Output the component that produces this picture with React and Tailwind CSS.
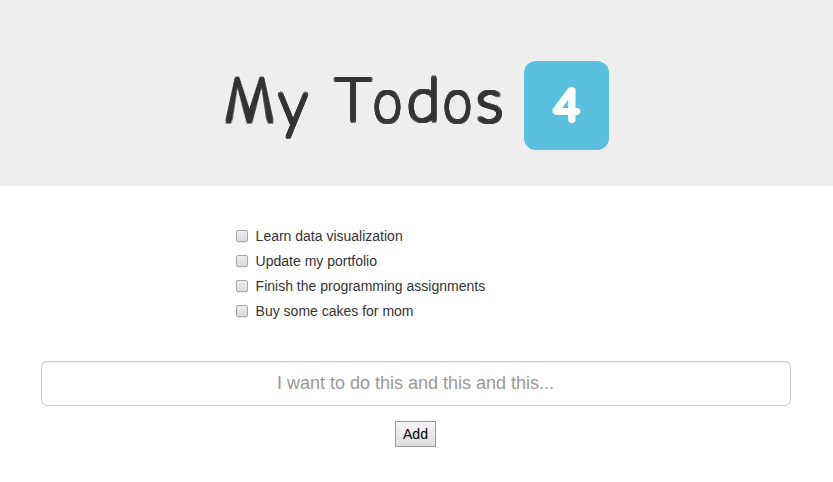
import React from "react";

const todos = [
  "Learn data visualization",
  "Update my portfolio",
  "Finish the programming assignments",
  "Buy some cakes for mom",
];

function Letter({ className, children }) {
  return <span className={"flex justify-center " + className}>{children}</span>;
}

export default function App() {
  return (
    <div className="h-[482px] w-[833px] overflow-hidden bg-white font-['Liberation_Sans',Arial,sans-serif] text-[14px] leading-5 text-[#333]">
      <header className="flex h-[186px] items-start bg-[#eee] pt-[61px] pl-[222px]">
        {/* Thin letters thickened by a ring of shadows, which rounds their stroke ends */}
        <h1 className="flex h-[89px] w-[302px] items-start font-['Lato','Comic_Sans_MS',sans-serif] text-[60px] leading-[76px] font-thin text-[#333] [-webkit-text-stroke:2px_#333] [text-shadow:2.3px_0_#333,2.1px_.9px_#333,1.6px_1.6px_#333,.9px_2.1px_#333,0_2.3px_#333,-.9px_2.1px_#333,-1.6px_1.6px_#333,-2.1px_.9px_#333,-2.3px_0_#333,-2.1px_-.9px_#333,-1.6px_-1.6px_#333,-.9px_-2.1px_#333,0_-2.3px_#333,.9px_-2.1px_#333,1.6px_-1.6px_#333,2.1px_-.9px_#333]">
          <Letter className="w-[55px] font-['Roboto'] [transform:translateY(-4px)_perspective(60px)_rotateX(35deg)_scaleY(1.19)_scaleX(.83)]">M</Letter>
          <Letter className="ml-[1px] w-[30px]"><span className="translate-y-[1px] scale-y-[1.08]">y</span></Letter>
          <span className="w-[25px] whitespace-pre"> </span>
          <Letter className="w-[41px] -translate-y-[1px]"><span className="scale-x-[1.06]">T</span></Letter>
          <Letter className="w-[28px]"><span className="scale-x-[.86]">o</span></Letter>
          <Letter className="w-[43px] -translate-y-[1px]">d</Letter>
          <Letter className="w-[26px]"><span className="scale-x-[.86]">o</span></Letter>
          <Letter className="w-[37px]"><span className="scale-x-[1.08]">s</span></Letter>
        </h1>
        <span className="flex h-[89px] w-[85px] items-center justify-center rounded-[12px] bg-[#5bc0de] pb-[3px] font-['Lato','Comic_Sans_MS',sans-serif] text-[45px] leading-none font-normal text-white [-webkit-text-stroke:.6px_white] [text-shadow:1.8px_0_#fff,1.3px_1.3px_#fff,0_1.8px_#fff,-1.3px_1.3px_#fff,-1.8px_0_#fff,-1.3px_-1.3px_#fff,0_-1.8px_#fff,1.3px_-1.3px_#fff]">
          4
        </span>
      </header>
      <main>
        <ul className="flex flex-col gap-[5px] pt-[40px] pl-[236px]">
          {todos.map((todo) => (
            <li key={todo}>
              <label className="flex h-5 items-center gap-[7.6px]">
                <input
                  type="checkbox"
                  className="size-3 appearance-none rounded-[2px] border border-[#a8a8a8] bg-linear-to-b from-[#eee] to-[#dcdcdc] shadow-[0_1px_1px_#eee]"
                />
                <span>{todo}</span>
              </label>
            </li>
          ))}
        </ul>
        <div className="mt-[40px] flex flex-col items-center gap-[15px] pr-[42px] pl-[41px]">
          <input
            type="text"
            placeholder="I want to do this and this and this..."
            className="h-[45px] w-full rounded-[6px] border border-[#ccc] pr-[17px] pl-4 text-center text-[18px] shadow-[inset_0_1px_1px_rgba(0,0,0,.075)] placeholder:text-[#999]"
          />
          <button className="mr-[1px] h-[26px] w-[41px] border border-[#999] bg-linear-to-b from-[#f6f6f6] to-[#ddd] text-[14px] text-black">
            Add
          </button>
        </div>
      </main>
    </div>
  );
}
